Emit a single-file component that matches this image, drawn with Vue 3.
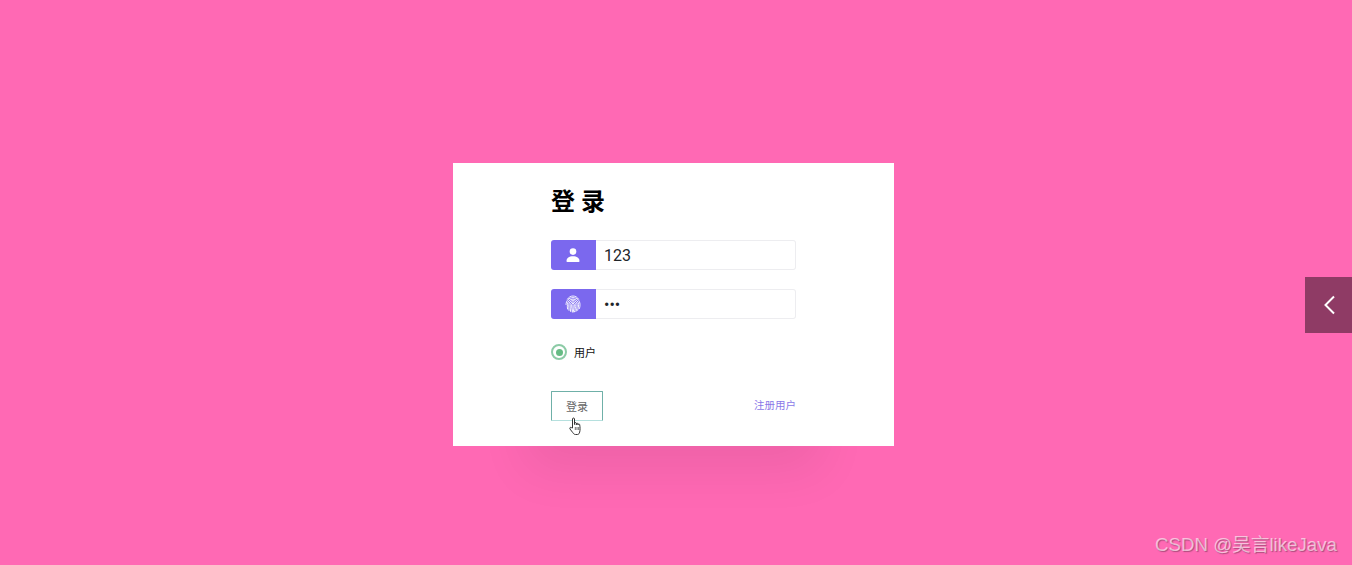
<template>
  <div class="page">
    <form class="card" @submit.prevent>
      <h1 class="title">登 录</h1>

      <div class="field">
        <span class="addon">
          <svg width="16" height="16" viewBox="0 0 16 16" fill="#fff">
            <circle cx="8" cy="4.6" r="3.3" />
            <path d="M1.500 14.200c0-3.200 2.600-5 6.500-5s6.500 1.800 6.500 5c0 .5-.3.8-.8.8H2.300c-.5 0-.8-.3-.8-.8z" />
          </svg>
        </span>
        <input class="input" type="text" value="123" />
      </div>

      <div class="field">
        <span class="addon">
          <svg width="16" height="18" viewBox="0 0 16 18" fill="none" stroke="#fff" stroke-width=".9" stroke-linecap="round">
            <path d="M2.400 4.200C3.600 2.300 5.600 1 8 1s4.400 1.300 5.600 3.200" />
            <path d="M1 9.500C1 5.600 4.100 2.600 8 2.600s7 3 7 6.900c0 1.500-.1 2.800-.5 4" />
            <path d="M2.500 14C2.200 12.600 2.400 11 2.400 9.500 2.400 6.500 4.900 4.100 8 4.100s5.600 2.400 5.600 5.400c0 2-.2 4-.9 5.800" />
            <path d="M4 15.400c-.3-2-.2-4-.2-5.900C3.800 7.300 5.700 5.600 8 5.600s4.200 1.700 4.200 3.900c0 2.500-.3 4.800-1.300 7" />
            <path d="M5.600 16.500c-.4-2.200-.4-4.700-.4-7 0-1.400 1.300-2.500 2.800-2.500s2.800 1.100 2.800 2.500c0 2.700-.4 5.200-1.500 7.500" />
            <path d="M7.300 17c-.5-2.500-.7-5-.7-7.500 0-.7.600-1.200 1.400-1.200s1.400.5 1.400 1.200c0 2.700-.4 5.300-1.200 7.500" />
            <path d="M8 9.700c0 2.300.1 4.300-.2 6.300" />
          </svg>
        </span>
        <input class="input" type="password" value="123" />
      </div>

      <label class="radio">
        <span class="radio-mark"></span>
        <span class="radio-text">用户</span>
      </label>

      <div class="actions">
        <button class="submit" type="button">登录</button>
        <a class="register">注册用户</a>
        <svg class="pointer" width="14" height="19" viewBox="0 0 14 19" fill="#fff" stroke="#333" stroke-width="1" stroke-linejoin="round">
          <path d="M3.500 11V2c0-1.300 2-1.300 2 0v5.500V6.300c0-1 1.800-1 1.800 0v1.500-.8c0-1 1.700-1 1.700 0v1-.3c0-1 1.700-1 1.700 0 .5 2.800.5 5.300 0 7.300-.3 1.300-1 2.500-2.200 2.500H6.500c-1.300 0-2-.8-2.800-2L1 12c-.7-1.300.7-2.300 1.600-1.300z" />
          <path d="M6.300 10v3M8 10v3M9.700 10v3" fill="none" stroke-width=".7" />
        </svg>
      </div>
    </form>

    <div class="side-tab">
      <svg width="14" height="20" viewBox="0 0 14 20" fill="none" stroke="#fff" stroke-width="2">
        <path d="M12 1.500 3.500 10l8.500 8.500" />
      </svg>
    </div>

    <div class="watermark">CSDN @吴言likeJava</div>
  </div>
</template>

<script setup>
</script>

<style>
html,
body {
  margin: 0;
  background: #ff69b4;
}
</style>

<style scoped>
.page {
  position: relative;
  height: 565px;
  overflow: hidden;
  box-sizing: border-box;
  padding: 163px 0 0 453px;
  background: #ff69b4;
  font-family: Roboto, "Noto Sans CJK SC", sans-serif;
}

.card {
  width: 441px;
  height: 283px;
  box-sizing: border-box;
  padding: 25px 98px 0;
  background: #fff;
  box-shadow: 0 97px 50px -73px rgba(0, 0, 0, 0.07);
}

.title {
  margin: 0 0 23px;
  height: 29px;
  font-size: 24px;
  line-height: 29px;
  font-weight: 700;
  color: #000;
}

.field {
  display: flex;
  height: 30px;
  margin-bottom: 19px;
}

.addon {
  display: flex;
  flex: none;
  align-items: center;
  justify-content: center;
  width: 45px;
  padding-right: 2px;
  box-sizing: border-box;
  background: #7b68ee;
  border-radius: 3px 0 0 3px;
}

.input {
  flex: 1;
  min-width: 0;
  box-sizing: border-box;
  padding: 0 8px;
  border: 1px solid #ededf0;
  border-left: 0;
  border-radius: 0 3px 3px 0;
  outline: none;
  font-family: inherit;
  font-size: 16px;
  color: #212529;
}

.radio {
  display: flex;
  align-items: center;
  gap: 7px;
  height: 16px;
  margin-top: 25px;
  font-size: 11px;
  color: #111;
}

.radio-text {
  margin-bottom: 1px;
}

.radio-mark {
  position: relative;
  flex: none;
  width: 16px;
  height: 16px;
  box-sizing: border-box;
  border: 2px solid #8ccba6;
  border-radius: 50%;
}

.radio-mark::after {
  content: "";
  position: absolute;
  inset: 2.500px;
  border-radius: 50%;
  background: #66bb84;
}

.actions {
  position: relative;
  display: flex;
  align-items: center;
  justify-content: space-between;
  margin-top: 31px;
}

.submit {
  width: 52px;
  height: 30px;
  padding: 0;
  background: #fff;
  border: 1px solid #6fb0a8;
  border-bottom-color: #b5e0de;
  border-radius: 1px;
  font-family: inherit;
  font-size: 11px;
  color: #666;
}

.register {
  font-size: 10.500px;
  color: #8a78e8;
  margin-bottom: 4px;
}

.pointer {
  position: absolute;
  left: 18px;
  top: 26px;
}

.side-tab {
  position: absolute;
  top: 277px;
  right: 0;
  display: flex;
  align-items: center;
  justify-content: center;
  width: 47px;
  height: 56px;
  background: rgba(0, 0, 0, 0.44);
}

.watermark {
  position: absolute;
  right: 15px;
  bottom: 8px;
  font-family: "Liberation Sans", "Noto Sans CJK SC", sans-serif;
  font-size: 18.700px;
  line-height: 24px;
  color: rgba(255, 255, 255, 0.6);
  text-shadow: 1px 1px 1px rgba(90, 50, 70, 0.5);
}
</style>
